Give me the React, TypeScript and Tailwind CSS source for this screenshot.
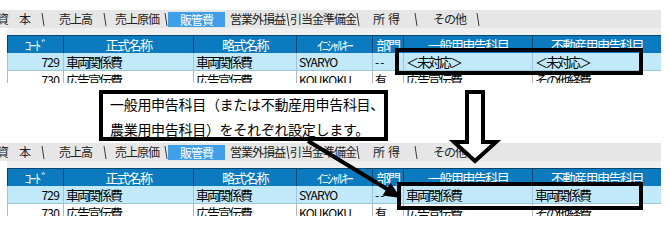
import React from 'react';

type Tab = { label: React.ReactNode; key: string; cls: string; active?: boolean };

const tabs: Tab[] = [
  { key: 'shihon', label: '資　本', cls: '-ml-[7px] w-[48px] pl-[4px]' },
  { key: 'uriage', label: '売上高', cls: 'w-[58px] pl-[14px]' },
  { key: 'genka', label: '売上原価', cls: 'w-[57px] pl-[8px]' },
  { key: 'hankan', label: '販管費', cls: 'w-[57px] pl-[12px]', active: true },
  { key: 'eigai', label: '営業外損益', cls: 'w-[57px] pl-[1px]' },
  { key: 'hikiate', label: '引当金準備金', cls: 'w-[66px] pl-[0px]' },
  {
    key: 'shotoku',
    label: (
      <>
        所<span className="ml-[4px]">得</span>
      </>
    ),
    cls: 'w-[54px] pl-[13px]',
  },
  { key: 'sonota', label: 'その他', cls: 'w-[58px] pl-[15px]' },
];

const cols = 'grid grid-cols-[56px_130px_103px_76px_31px_129px_129px]';

const headers = ['ｺｰﾄﾞ', '正式名称', '略式名称', 'ｲﾆｼｬﾙｷｰ', '部門', '一般用申告科目', '不動産用申告科目'];

// font per column: ascii columns are narrower, the dept column keeps its dashes apart
function cellFont(i: number) {
  if (i === 4) return 'text-[12px] tracking-[1px]';
  if (i === 0 || i === 3) return 'text-[12px] tracking-[-0.8px]';
  return 'text-[13px] tracking-[-2px]';
}

function Separator() {
  return (
    <svg width="4" height="18" viewBox="0 0 4 18" className="shrink-0">
      <path d="M1 3 L3 16" stroke="#3a3a3a" strokeWidth="1" fill="none" />
    </svg>
  );
}

function TabStrip() {
  return (
    <div className="flex h-[18px] w-[661px] items-center overflow-hidden bg-[#e6e6e6] text-[12px] tracking-[-1px] text-[#222]">
      {tabs.map((t) => (
        <React.Fragment key={t.key}>
          {t.active ? (
            <div className={`${t.cls} mt-[1px] h-[15px] shrink-0 whitespace-nowrap bg-[#3f9fe8] leading-[15px] text-white`}>
              {t.label}
            </div>
          ) : (
            <div className={`${t.cls} h-full shrink-0 whitespace-nowrap leading-[18px]`}>{t.label}</div>
          )}
          {t.active ? <div className="w-[4px] shrink-0" /> : <Separator />}
        </React.Fragment>
      ))}
    </div>
  );
}

function Row({ values, rowCls, lineCls }: { values: string[]; rowCls: string; lineCls: string }) {
  return (
    <div className={`${cols} h-[18px] text-black ${rowCls}`}>
      {values.map((v, i) => (
        <div
          key={i}
          className={`overflow-hidden whitespace-nowrap border-l leading-[17px] ${lineCls} ${cellFont(i)} ${
            i === 0 ? 'pr-[4px] text-right' : 'pl-[2px]'
          }`}
        >
          {v}
        </div>
      ))}
    </div>
  );
}

function Snapshot({ general, realEstate }: { general: string; realEstate: string }) {
  return (
    <div className="h-[73px] w-[663px] overflow-hidden">
      <TabStrip />
      <div className="ml-[7px] h-[7px] w-[654px] bg-[#f0f0f0]" />
      <div className="ml-[7px] w-[654px]">
        <div className={`${cols} h-[18px] border-t border-[#06466f] bg-[#0b7abf] text-[13px] tracking-[-1.5px] text-white`}>
          {headers.map((h) => (
            <div key={h} className="overflow-hidden whitespace-nowrap border-l border-[#06466f] text-center leading-[17px]">
              {h}
            </div>
          ))}
        </div>
        <Row
          values={['729', '車両関係費', '車両関係費', 'SYARYO', '--', general, realEstate]}
          rowCls="border-b border-[#9fc6d8] bg-[#c1e9f9]"
          lineCls="border-[#9fc6d8]"
        />
        <Row
          values={['730', '広告宣伝費', '広告宣伝費', 'KOUKOKU', '有', '広告宣伝費', 'その他経費']}
          rowCls="bg-white"
          lineCls="border-[#b8b8b8]"
        />
      </div>
    </div>
  );
}

export default function App() {
  return (
    <div className="relative h-[242px] w-[670px] overflow-hidden bg-white font-['Noto_Sans_CJK_JP','Noto_Sans',sans-serif]">
      <div className="flex flex-col gap-[60px] pt-[10px]">
        <Snapshot general="＜未対応＞" realEstate="＜未対応＞" />
        <Snapshot general="車両関係費" realEstate="車両関係費" />
      </div>

      {/* highlight frames */}
      <div className="absolute left-[395px] top-[48px] h-[27px] w-[248px] border-4 border-black" />
      <div className="absolute left-[397px] top-[182px] h-[28px] w-[246px] border-4 border-black" />

      {/* callout */}
      <div className="absolute left-[99px] top-[90px] h-[51px] w-[289px] border-4 border-black bg-white">
        <div className="-mt-[2px] whitespace-nowrap pl-[7px] text-[14px] leading-[25px] tracking-[-0.3px] text-black">
          一般用申告科目（または不動産用申告科目、
          <br />
          農業用申告科目）をそれぞれ設定します。
        </div>
      </div>

      {/* arrows */}
      <svg className="pointer-events-none absolute left-0 top-0" width="670" height="242" viewBox="0 0 670 242">
        <polygon
          points="467,92 483,92 483,142 496,142 475,161 454,142 467,142"
          fill="white"
          stroke="black"
          strokeWidth="4"
          strokeLinejoin="miter"
        />
        <line x1="308" y1="141" x2="387" y2="189" stroke="black" strokeWidth="4" />
        <polygon points="401,198 382.6,195.5 390.4,182.7" fill="black" />
      </svg>
    </div>
  );
}
